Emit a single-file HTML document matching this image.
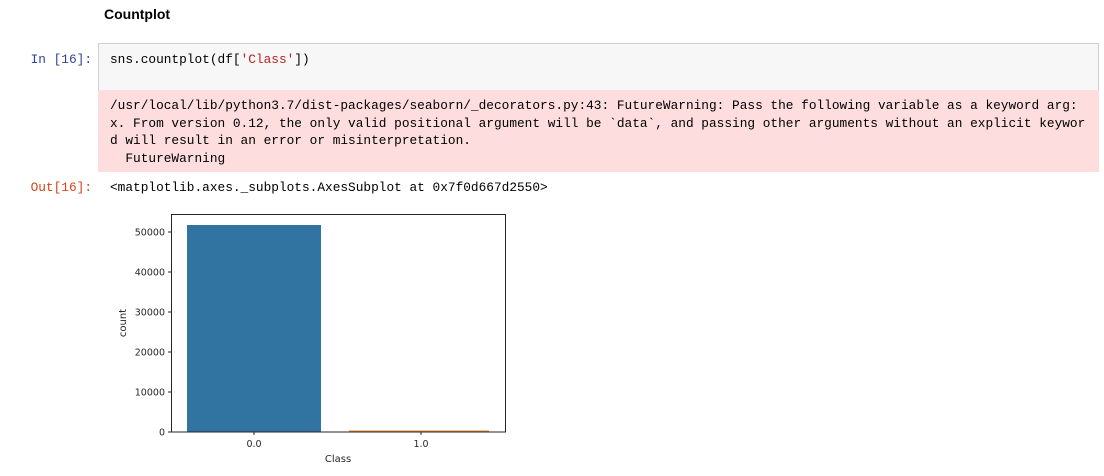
<!DOCTYPE html>
<html><head><meta charset="utf-8"><style>
body{margin:0;width:1104px;height:476px;background:#fff;position:relative;overflow:hidden;font-family:"Liberation Sans",sans-serif}
.mono{font-family:"Liberation Mono",monospace;font-size:12.8px;position:absolute;white-space:pre}
.p{position:absolute;right:1012px;text-align:right}
.h{position:absolute;left:104px;top:6px;font-weight:bold;font-size:14px;color:#000}
.inbox{position:absolute;left:98px;top:43px;width:999px;height:46px;background:#f7f7f7;border:1px solid #cfcfcf}
.err{position:absolute;left:98px;top:90px;width:1001px;height:82px;background:#fddddd}
</style></head><body>
<div class="h">Countplot</div>
<div class="mono p" style="top:52px;color:#303f9f">In [16]:</div>
<div class="inbox"></div>
<div class="mono" style="left:110px;top:52px;color:#000">sns.countplot(df[<span style="color:#ba2121">'Class'</span>])</div>
<div class="err"></div>
<div class="mono" style="left:110px;top:97px;line-height:17.5px;color:#000">/usr/local/lib/python3.7/dist-packages/seaborn/_decorators.py:43: FutureWarning: Pass the following variable as a keyword arg:
x. From version 0.12, the only valid positional argument will be `data`, and passing other arguments without an explicit keywor
d will result in an error or misinterpretation.
  FutureWarning</div>
<div class="mono p" style="top:180px;color:#d84315">Out[16]:</div>
<div class="mono" style="left:110px;top:180px;color:#000">&lt;matplotlib.axes._subplots.AxesSubplot at 0x7f0d667d2550&gt;</div>
<svg width="1104" height="476" style="position:absolute;left:0;top:0" font-family="DejaVu Sans,sans-serif" font-size="9.5" fill="#262626">
<rect x="187" y="225" width="134" height="207" fill="#3274a1"/>
<rect x="349" y="430.5" width="140" height="1.5" fill="#e1812c"/>
<rect x="171.5" y="214.5" width="334" height="217.5" fill="none" stroke="#262626" stroke-width="1"/>
<g stroke="#262626">
<line x1="168" y1="232" x2="171" y2="232"/><line x1="168" y1="272" x2="171" y2="272"/>
<line x1="168" y1="312" x2="171" y2="312"/><line x1="168" y1="352" x2="171" y2="352"/>
<line x1="168" y1="392" x2="171" y2="392"/><line x1="168" y1="432" x2="171" y2="432"/>
<line x1="254" y1="432" x2="254" y2="435"/><line x1="421" y1="432" x2="421" y2="435"/>
</g>
<g text-anchor="end">
<text x="165" y="235.5">50000</text><text x="165" y="275.5">40000</text>
<text x="165" y="315.5">30000</text><text x="165" y="355.5">20000</text>
<text x="165" y="395.5">10000</text><text x="165" y="435.5">0</text>
</g>
<g text-anchor="middle">
<text x="254" y="447">0.0</text><text x="421" y="447">1.0</text>
<text x="338" y="462" font-size="10">Class</text>
<text x="0" y="0" font-size="10" transform="translate(126,323) rotate(-90)">count</text>
</g>
</svg>
</body></html>
